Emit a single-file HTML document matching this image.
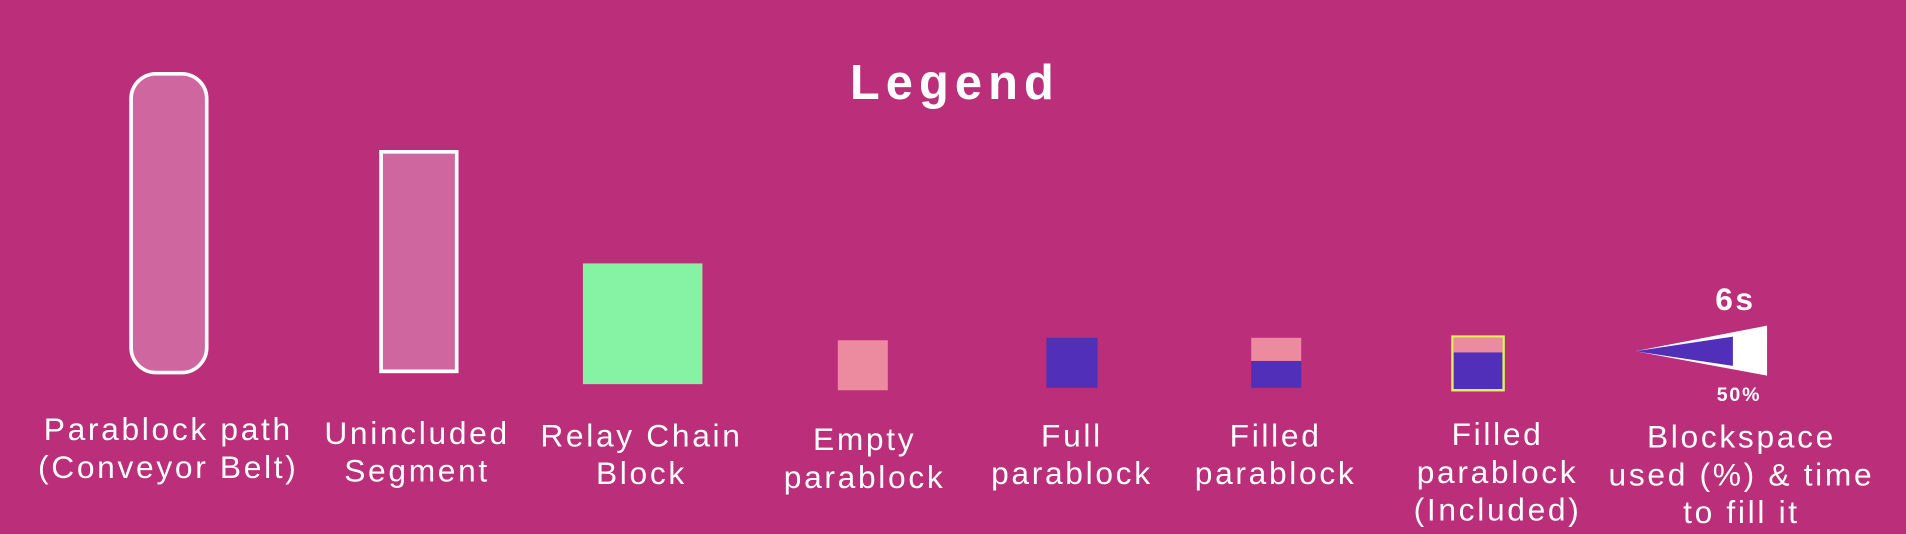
<!DOCTYPE html>
<html><head><meta charset="utf-8"><style>
html,body{margin:0;padding:0;background:#BB2E7A;width:1906px;height:534px;overflow:hidden}
#c{position:absolute;left:0;top:0;width:1563px;height:438px;transform:scale(1.2195);transform-origin:0 0;font-family:"Liberation Sans",sans-serif;color:#fff}
.a{position:absolute}
.l{position:absolute;text-align:center;font-size:26px;line-height:31px;width:280px;letter-spacing:2.2px}
</style></head><body><div id="c">
<div class="a" style="left:633px;top:46px;width:300px;text-align:center;font-weight:bold;font-size:40px;letter-spacing:5px">Legend</div>
<div class="a" style="left:106px;top:59px;width:59px;height:242px;border:3px solid #fff;border-radius:22px;background:#D066A0"></div>
<div class="a" style="left:311px;top:123px;width:59px;height:177px;border:3px solid #fff;background:#D066A0"></div>
<div class="a" style="left:478px;top:216px;width:98px;height:99px;background:#86F2A3"></div>
<div class="a" style="left:687px;top:279px;width:41px;height:41px;background:#EC8AA0"></div>
<div class="a" style="left:858px;top:277px;width:42px;height:41px;background:#512FB9"></div>
<div class="a" style="left:1026px;top:277px;width:41px;height:19px;background:#EC8AA0"></div>
<div class="a" style="left:1026px;top:296px;width:41px;height:22px;background:#512FB9"></div>
<div class="a" style="left:1190px;top:275px;width:40px;height:42px;border:2px solid #DFF25B;background:#512FB9"></div>
<div class="a" style="left:1192px;top:277px;width:40px;height:12px;background:#EC8AA0"></div>
<svg class="a" style="left:0;top:0" width="1563" height="438">
<polygon points="1341,288 1449,267 1449,308" fill="#fff"/>
<polygon points="1341,288 1421,276 1421,300" fill="#512FB9"/>
</svg>
<div class="a" style="left:1378px;top:230px;width:90px;text-align:center;font-weight:bold;font-size:26px;letter-spacing:2px">6s</div>
<div class="a" style="left:1381px;top:316px;width:90px;text-align:center;font-weight:bold;font-size:16px;letter-spacing:1.5px">50%</div>
<div class="l" style="left:-2px;top:337px">Parablock path<br>(Conveyor Belt)</div>
<div class="l" style="left:202px;top:340px">Unincluded<br>Segment</div>
<div class="l" style="left:386px;top:342px">Relay Chain<br>Block</div>
<div class="l" style="left:569px;top:345px">Empty<br>parablock</div>
<div class="l" style="left:739px;top:342px">Full<br>parablock</div>
<div class="l" style="left:906px;top:342px">Filled<br>parablock</div>
<div class="l" style="left:1088px;top:341px">Filled<br>parablock<br>(Included)</div>
<div class="l" style="left:1288px;top:343px">Blockspace<br>used (%) &amp; time<br>to fill it</div>
</div></body></html>
